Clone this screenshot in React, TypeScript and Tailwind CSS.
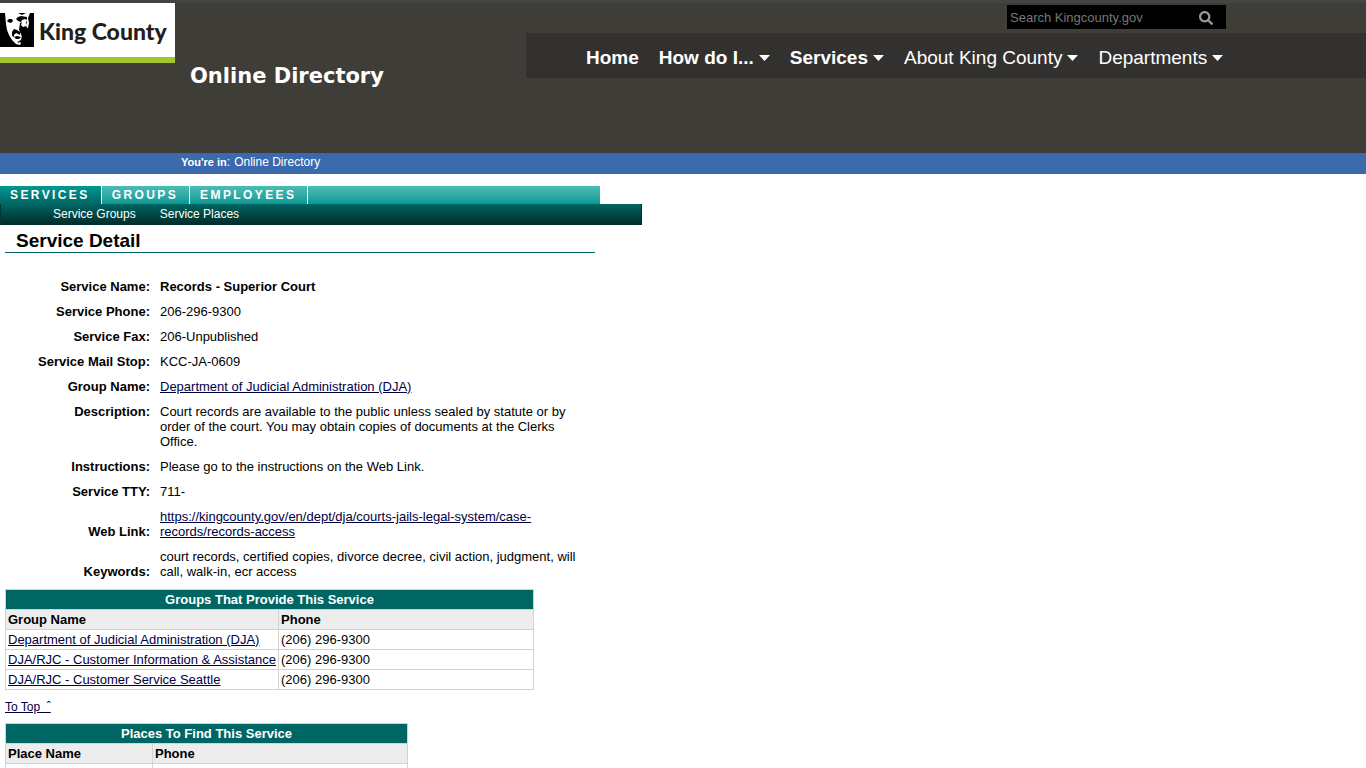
import { FaSearch } from "react-icons/fa";

const navItems = [
  { label: "Home", bold: true, menu: false },
  { label: "How do I...", bold: true, menu: true },
  { label: "Services", bold: true, menu: true },
  { label: "About King County", bold: false, menu: true },
  { label: "Departments", bold: false, menu: true },
];

const groups = [
  "Department of Judicial Administration (DJA)",
  "DJA/RJC - Customer Information & Assistance",
  "DJA/RJC - Customer Service Seattle",
];

const linkClass = "text-[#000044] underline";
const labelClass = "w-[150px] py-[5px] pr-[5px] text-right font-bold";
const valueClass = "px-[5px] py-[5px] text-left align-top font-normal";
const cellClass = "border border-[#d3d3cf] px-[2px] py-[2px] text-left";
const tabClass = "border-r border-white pr-[11px] pl-[10px]";

function Logo() {
  return (
    <a
      href="#home"
      aria-label="King County"
      className="flex h-[60px] w-[175px] shrink-0 items-center border-b-[6px] border-[#a6c42f] bg-white"
    >
      <svg width="34" height="34" viewBox="0 0 34 34" aria-hidden="true">
        <rect width="34" height="34" fill="#000" />
        <path
          d="M5 0 L18 0 L22 2 L26 0 L30 0 L28 5 L29 10 L28 15 L25 17 L22 16 L20 19 L22 22 L21 27 L19 28 L21 30 L20 32 L16 31 L12 27 L9 22 L7 17 L6 11 Z"
          fill="#fff"
        />
        <path d="M7 8 L9 6 L12 6 L13 8 L11 10 L8 9 Z" />
        <path d="M16 6 L18 4 L21 3 L27 4 L27 7 L25 6 L22 7 L21 9 L18 8 Z" />
        <path d="M20 10 L22 9 L21 12 L23 14 L26 13 L28 16 L27 22 L23 26 L21 21 L19 17 Z" />
        <path d="M12 19 L14 16 L17 17 L20 19 L20 22 L18 21 L16 20 L14 22 L14 24 L12 23 Z" />
        <path d="M14 24 L17 23 L21 24 L19 26 L16 26 Z" />
        <path d="M17 29 L20 28 L19 30 Z" />
        <path d="M26 9 L27 8 L27 12 Z" />
      </svg>
      <span className="ml-[5px] pt-[2px] font-['Lato'] text-[23px] leading-[30px] font-black whitespace-nowrap text-[#231f20]">
        King County
      </span>
    </a>
  );
}

function Header() {
  return (
    <header className="flex h-[153px] items-start border-t-[3px] border-[#444444] bg-[#3f3d38] text-white">
      <Logo />
      <h1 className="mt-[58px] ml-[15px] shrink-0 font-['DejaVu_Sans'] text-[21px] leading-[30px] font-bold">
        Online Directory
      </h1>
      <div className="ml-auto w-[840px]">
        <form className="mt-[2px] mr-[140px] ml-auto flex h-6 w-[219px] items-center bg-black pt-[2px] text-[#999999]">
          <input
            type="text"
            aria-label="Search Kingcounty.gov"
            placeholder="Search Kingcounty.gov"
            className="w-[192px] px-[3px] text-[13px] leading-4 placeholder:text-[#777777]"
          />
          <button type="button" aria-label="Search">
            <FaSearch size={14} />
          </button>
        </form>
        <nav className="mt-1 flex h-[45px] items-center gap-5 bg-[#33312f] pt-1 pl-[60px] text-[19px] leading-6">
          {navItems.map((item) => (
            <a
              key={item.label}
              href="#menu"
              className={`flex items-center gap-[5px] whitespace-nowrap ${item.bold ? "font-bold" : ""}`}
            >
              {item.label}
              {item.menu && (
                <svg width="11" height="6" viewBox="0 0 11 6" aria-hidden="true">
                  <path d="M0 0 H11 L5.5 6 Z" fill="#fff" />
                </svg>
              )}
            </a>
          ))}
        </nav>
      </div>
    </header>
  );
}

function Tabs() {
  return (
    <nav className="mt-3 text-white">
      <div className="flex h-[18px] w-[600px] bg-linear-to-b from-[#4cbdb7] to-[#009994] text-[12px] leading-[18px] font-bold tracking-[0.2em]">
        <a
          href="#services"
          className={`${tabClass} bg-linear-to-b from-[#009994] to-[#006663]`}
        >
          SERVICES
        </a>
        <a href="#groups" className={tabClass}>
          GROUPS
        </a>
        <a href="#employees" className={tabClass}>
          EMPLOYEES
        </a>
      </div>
      <div className="flex h-[21px] w-[642px] gap-6 border-x border-[#003333] bg-linear-to-b from-[#006663] to-[#002b2b] pl-[52px] text-[12px] leading-[20px]">
        <a href="#service-groups">Service Groups</a>
        <a href="#service-places">Service Places</a>
      </div>
    </nav>
  );
}

function Details() {
  return (
    <table className="mt-[21px] w-[590px] text-[13px] leading-[15px]">
      <tbody>
        <tr>
          <th className={labelClass}>Service Name:</th>
          <td className="p-[5px] font-bold">Records - Superior Court</td>
        </tr>
        <tr>
          <th className={labelClass}>Service Phone:</th>
          <td className={valueClass}>206-296-9300</td>
        </tr>
        <tr>
          <th className={labelClass}>Service Fax:</th>
          <td className={valueClass}>206-Unpublished</td>
        </tr>
        <tr>
          <th className={labelClass}>Service Mail Stop:</th>
          <td className={valueClass}>KCC-JA-0609</td>
        </tr>
        <tr>
          <th className={labelClass}>Group Name:</th>
          <td className={valueClass}>
            <a href="#dja" className={linkClass}>
              Department of Judicial Administration (DJA)
            </a>
          </td>
        </tr>
        <tr>
          <th className={`${labelClass} align-top`}>Description:</th>
          <td className={valueClass}>
            Court records are available to the public unless sealed by statute or by
            order of the court. You may obtain copies of documents at the Clerks
            Office.
          </td>
        </tr>
        <tr>
          <th className={labelClass}>Instructions:</th>
          <td className={valueClass}>
            Please go to the instructions on the Web Link.
          </td>
        </tr>
        <tr>
          <th className={labelClass}>Service TTY:</th>
          <td className={valueClass}>711-</td>
        </tr>
        <tr>
          <th className={`${labelClass} align-bottom`}>Web Link:</th>
          <td className={valueClass}>
            <a href="#records-access" className={linkClass}>
              https://kingcounty.gov/en/dept/dja/courts-jails-legal-system/case-records/records-access
            </a>
          </td>
        </tr>
        <tr>
          <th className={`${labelClass} align-bottom`}>Keywords:</th>
          <td className={`${valueClass} pr-3`}>
            court records, certified copies, divorce decree, civil action, judgment,
            will call, walk-in, ecr access
          </td>
        </tr>
      </tbody>
    </table>
  );
}

function App() {
  return (
    <div className="h-screen overflow-hidden bg-white font-['Liberation_Sans',Arial,sans-serif] text-black">
      <Header />
      <div className="flex h-[21px] gap-1 bg-[#3a6aad] pl-[181px] text-[12px] leading-[18px] text-white">
        <span>
          <b className="text-[11px]">You're in</b>:
        </span>
        <a href="#directory">Online Directory</a>
      </div>
      <Tabs />
      <main className="pl-[5px]">
        <h2 className="h-7 w-[590px] border-b border-[#006663] pt-1 pl-[11px] text-[19px] leading-6 font-bold">
          Service Detail
        </h2>
        <Details />
        <table className="mt-[5px] w-[529px] border-collapse text-[13px] leading-[15px]">
          <thead>
            <tr className="bg-[#006663] text-white">
              <th colSpan={2} className="border border-[#d3d3cf] py-[2px]">
                Groups That Provide This Service
              </th>
            </tr>
            <tr className="bg-[#ededed]">
              <th className={`${cellClass} w-[273px]`}>Group Name</th>
              <th className={cellClass}>Phone</th>
            </tr>
          </thead>
          <tbody>
            {groups.map((name) => (
              <tr key={name}>
                <td className={cellClass}>
                  <a href="#group" className={`${linkClass} whitespace-nowrap`}>
                    {name}
                  </a>
                </td>
                <td className={cellClass}>(206) 296-9300</td>
              </tr>
            ))}
          </tbody>
        </table>
        <p className="pt-[10px] pb-2 text-[12px] leading-[15px]">
          <a href="#top" className={linkClass}>
            To Top &nbsp;ˆ
          </a>
        </p>
        <table className="w-[403px] border-collapse text-[13px] leading-[15px]">
          <thead>
            <tr className="bg-[#006663] text-white">
              <th colSpan={2} className="border border-[#d3d3cf] py-[2px]">
                Places To Find This Service
              </th>
            </tr>
            <tr className="bg-[#ededed]">
              <th className={`${cellClass} w-[147px]`}>Place Name</th>
              <th className={cellClass}>Phone</th>
            </tr>
          </thead>
          <tbody>
            <tr>
              <td className={`${cellClass} h-5`}></td>
              <td className={cellClass}></td>
            </tr>
          </tbody>
        </table>
      </main>
    </div>
  );
}

export default App;
